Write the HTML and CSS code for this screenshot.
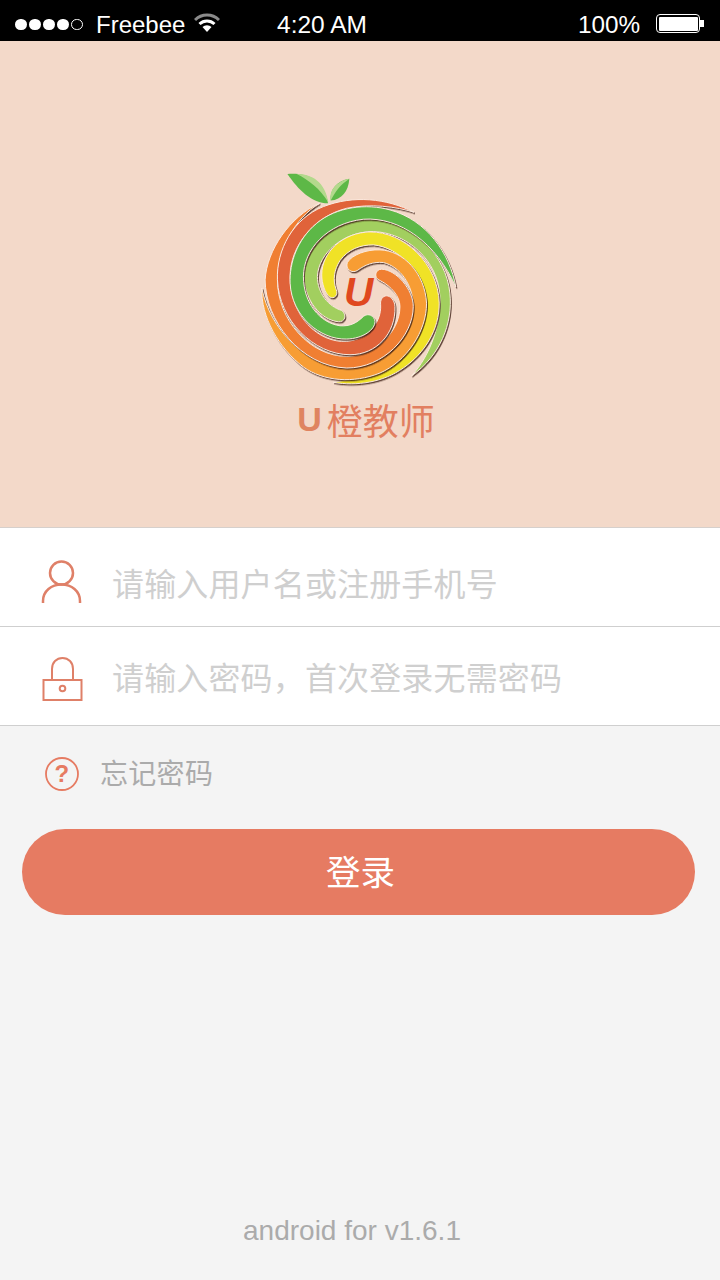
FILE: index.html
```html
<!DOCTYPE html>
<html>
<head>
	<title>U橙教师</title>
	<meta name="viewport" content="width=device-width, initial-scale=1">
	<link rel="stylesheet" href="styles.css">
</head>
<body>
	<div class="status">
		<div class="signal"><i></i><i></i><i></i><i></i><i class="off"></i></div>
		<span class="carrier">Freebee</span>
		<svg class="wifi" viewBox="0 0 26 20">
			<path d="M1 7 A17 17 0 0 1 25 7" fill="none" stroke="#8a8a8a" stroke-width="3"/>
			<path d="M5.5 11 A11 11 0 0 1 20.5 11" fill="none" stroke="#fff" stroke-width="3"/>
			<path d="M8.5 14 A6.5 6.5 0 0 1 17.5 14 L13 19 Z" fill="#fff"/>
		</svg>
		<span class="time">4:20 AM</span>
		<span class="percent">100%</span>
		<div class="battery"><div class="charge"></div></div>
		<div class="nub"></div>
	</div>

	<div class="hero">
		<svg class="logo" viewBox="0 0 720 700">
			<g class="bands">
				<path fill="#a2cf5f" d="M515 648 C600 590 640 490 630 400 C620 290 520 180 390 178 C280 178 190 260 192 355 C195 420 240 480 295 486 C315 488 322 465 305 452 C265 440 232 400 232 350 C235 280 310 215 400 215 C500 218 595 300 600 410 C605 490 570 590 515 648 Z"/>
				<path fill="#f0e226" d="M280 668 C350 680 430 668 490 625 C555 580 598 510 598 430 C595 310 490 215 390 216 C310 218 245 275 245 345 C245 370 255 400 268 411 C283 420 296 405 288 388 C278 360 282 330 300 302 C325 268 360 255 400 255 C480 262 556 345 556 430 C552 510 490 590 410 632 C370 650 320 662 280 668 Z"/>
				<path fill="#f79d34" d="M65 385 C62 470 115 565 190 622 C250 665 340 672 420 640 C500 605 560 515 560 430 C555 340 490 272 420 270 C380 268 335 285 322 308 C315 328 335 342 352 332 C375 315 400 305 430 308 C480 320 520 375 520 440 C515 530 430 625 320 625 C200 622 90 510 65 385 Z"/>
				<path fill="#f07f32" d="M238 130 C150 170 80 270 75 360 C75 480 180 620 320 625 C430 625 520 530 520 440 C520 390 470 330 425 328 C405 328 400 355 420 362 C455 380 480 410 480 440 C480 520 400 590 320 590 C210 590 112 480 112 360 C112 270 165 175 238 130 Z"/>
				<path fill="#e0633a" d="M522 157 C440 115 340 105 250 140 C160 175 108 270 112 360 C116 480 220 585 330 585 C410 585 468 520 465 440 C464 420 450 408 440 408 C428 408 420 420 422 435 C425 490 380 540 320 545 C235 550 150 470 150 350 C150 260 220 170 320 145 C390 130 470 140 522 157 Z"/>
				<path fill="#5db847" d="M648 382 C630 280 560 180 450 150 C380 130 290 140 230 190 C170 240 148 310 150 370 C155 470 240 540 320 538 C370 536 405 510 405 485 C403 468 385 458 370 470 C350 490 330 500 300 498 C240 490 190 430 190 350 C190 270 260 190 370 178 C480 170 590 250 648 382 Z"/>
			</g>
			<text class="logo-u" x="356" y="438">U</text>
			<path fill="#5db847" d="M142 42 C190 38 250 50 264 130 C215 130 175 90 142 42 Z"/>
			<path fill="#b3d98c" d="M170 42 C215 42 255 65 265 128 C240 85 205 60 170 42 Z"/>
			<path fill="#5db847" d="M328 56 C325 95 305 118 272 122 C268 90 290 62 328 56 Z"/>
			<path fill="#b3d98c" d="M328 56 C300 75 285 95 272 122 C266 90 290 64 328 56 Z"/>
		</svg>
		<div class="brand"><span class="brand-u">U</span>橙教师</div>
	</div>

	<div class="form">
		<div class="row row-user">
			<svg class="icon" viewBox="0 0 44 50">
				<circle cx="21.500" cy="16" r="11.500"/>
				<path d="M3 46 V44 C3 34 11.500 27.500 21.500 27.500 C31.500 27.500 40 34 40 44 V46"/>
			</svg>
			<span class="hint">请输入用户名或注册手机号</span>
		</div>
		<div class="row row-pass">
			<svg class="icon" viewBox="0 0 44 50">
				<rect x="3.500" y="24" width="38" height="20"/>
				<path d="M12 24 V13 C12 6.500 16.500 2 22.500 2 C28.500 2 33 6.500 33 13 V24"/>
				<circle cx="22.500" cy="32.500" r="2.800"/>
			</svg>
			<span class="hint">请输入密码，首次登录无需密码</span>
		</div>
	</div>

	<div class="forgot">
		<svg class="help" viewBox="0 0 34 34">
			<circle cx="17" cy="17" r="16"/>
			<text x="17" y="25">?</text>
		</svg>
		<span>忘记密码</span>
	</div>

	<div class="login">登录</div>

	<div class="version">android for v1.6.1</div>
</body>
</html>
```

FILE: styles.css
```css
* {
	box-sizing: border-box;
}
body, html {
	margin: 0px;
	height: 100%;
	background: #f4f4f4;
	font-family: "Liberation Sans", "Noto Sans CJK SC", sans-serif;
}
body {
	display: flex;
	flex-direction: column;
}
.status {
	height: 41px;
	background: black;
	color: white;
	font-size: 24px;
	display: flex;
	align-items: center;
	padding: 8px 0px 0px 15px;
}
.signal {
	display: flex;
	gap: 2.500px;
	width: 81px;
}
.signal i {
	width: 11.500px;
	height: 11.500px;
	border-radius: 50%;
	background: white;
}
.signal i.off {
	background: none;
	border: 1px solid white;
}
.carrier {
	width: 98px;
}
.wifi {
	width: 26px;
	height: 20px;
	margin-top: -3px;
}
.time {
	margin-left: 57px;
	width: 301px;
	font-size: 24.500px;
}
.percent {
	width: 78px;
	font-size: 24.300px;
}
.battery {
	width: 44px;
	height: 19px;
	margin-top: -2px;
	border: 1.500px solid white;
	border-radius: 4px;
	padding: 1.500px;
}
.charge {
	height: 100%;
	background: white;
	border-radius: 1px;
}
.nub {
	width: 4px;
	height: 7px;
	margin-top: -2px;
	background: white;
}
.hero {
	height: 487px;
	background: #f3d9c9;
	border-bottom: 1px solid #d6d0cc;
	display: flex;
	flex-direction: column;
	align-items: center;
	padding-top: 119px;
}
.logo {
	width: 240px;
	height: 233px;
	flex: none;
}
.bands path {
	stroke: #fbeadf;
	stroke-width: 3;
	filter: drop-shadow(3px 4px 2px rgba(60, 30, 20, 0.8));
}
.logo-u {
	font-family: "Liberation Sans", sans-serif;
	font-weight: bold;
	font-style: italic;
	font-size: 122px;
	text-anchor: middle;
	fill: #e0481f;
}
.brand {
	margin-top: 1px;
	padding-left: 12px;
	font-size: 36px;
	line-height: 50px;
	color: #e27f60;
	font-family: "Noto Sans CJK SC", sans-serif;
	display: flex;
	align-items: center;
}
.brand-u {
	font-family: "Liberation Sans", sans-serif;
	font-weight: bold;
	font-size: 34px;
	color: #df8460;
	margin-right: 5px;
}
.form {
	background: white;
}
.row {
	height: 99px;
	border-bottom: 1px solid #cfcfcf;
	display: flex;
	align-items: center;
	padding-left: 40px;
}
.row-user {
	padding-top: 10px;
}
.row-pass .icon {
	margin-top: 9px;
	stroke-width: 2;
}
.icon {
	width: 44px;
	height: 50px;
	margin-right: 28px;
	fill: none;
	stroke: #df8068;
	stroke-width: 2.500;
}
.hint {
	font-size: 32px;
	letter-spacing: 0.150px;
	color: #cfcfcf;
}
.forgot {
	height: 103px;
	padding: 31px 0px 0px 45px;
	display: flex;
	align-items: flex-start;
	font-size: 28px;
	letter-spacing: 0.300px;
	line-height: 36px;
	color: #ababab;
}
.help {
	width: 34px;
	height: 34px;
	margin-right: 21px;
}
.help circle {
	fill: none;
	stroke: #e67b62;
	stroke-width: 1.800;
}
.help text {
	font-size: 24px;
	font-weight: bold;
	text-anchor: middle;
	fill: #e67b62;
}
.login {
	margin: 0px 25px 0px 22px;
	height: 86px;
	border-radius: 43px;
	background: #e67b62;
	color: white;
	font-size: 34.500px;
	display: flex;
	align-items: center;
	justify-content: center;
	padding: 0px 0px 5px 4px;
}
.version {
	margin-top: auto;
	padding: 0px 16px 31px 0px;
	text-align: center;
	font-size: 28px;
	line-height: 36px;
	color: #ababab;
}
```
